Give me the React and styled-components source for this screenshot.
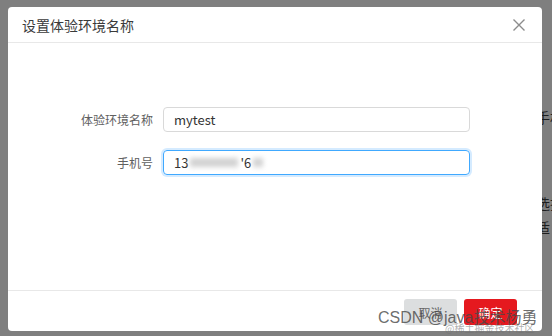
import React from "react";
import styled, { createGlobalStyle } from "styled-components";

const Global = createGlobalStyle`
  html, body { margin: 0; padding: 0; }
  body {
    font-family: "Noto Sans CJK SC", "Noto Sans", "Liberation Sans", sans-serif;
    background: #7f7f7f;
  }
`;

const Page = styled.div`
  position: relative;
  display: flex;
  width: 552px;
  height: 336px;
  padding: 7px 0 5px 8px;
  box-sizing: border-box;
  background: #7f7f7f;
  overflow: hidden;
`;

const Modal = styled.div`
  width: 534px;
  flex: none;
  display: flex;
  flex-direction: column;
  background: #fff;
  border-radius: 4px;
`;

const Header = styled.div`
  height: 36px;
  flex: none;
  display: flex;
  align-items: center;
  justify-content: space-between;
  padding: 0 16px 0 14px;
  border-bottom: 1px solid #e8e8e8;
  box-sizing: border-box;
`;

const Title = styled.div`
  font-size: 14px;
  color: #3a3a3a;
`;

const Close = styled.svg`
  width: 14px;
  height: 14px;
  stroke: #8c8c8c;
  stroke-width: 1.4;
`;

const Body = styled.div`
  flex: 1;
  display: flex;
  flex-direction: column;
  gap: 18px;
  padding-top: 64px;
`;

const Row = styled.div`
  display: flex;
  align-items: center;
  gap: 10px;
`;

const Label = styled.label`
  width: 145px;
  text-align: right;
  font-size: 12px;
  color: #606060;
`;

const Input = styled.div`
  width: 307px;
  height: 25px;
  box-sizing: border-box;
  display: flex;
  align-items: center;
  padding: 0 10px;
  border: 1px solid ${(p) => (p.$focus ? "#40a9ff" : "#d9d9d9")};
  border-radius: 4px;
  box-shadow: ${(p) => (p.$focus ? "0 0 0 2px rgba(24,144,255,0.18)" : "none")};
  font-size: 13px;
  color: #333;
`;

const Blur = styled.span`
  display: inline-block;
  width: ${(p) => p.$w}px;
  height: 9px;
  background: #d2d2d2;
  filter: blur(2.5px);
  margin: 0 2px;
`;

const Footer = styled.div`
  height: 41px;
  flex: none;
  display: flex;
  align-items: center;
  justify-content: flex-end;
  gap: 7px;
  padding: 2px 25px 0 0;
  border-top: 1px solid #e8e8e8;
  box-sizing: border-box;
`;

const Button = styled.button`
  width: 53px;
  height: 26px;
  border: none;
  border-radius: 3px;
  font-family: inherit;
  font-size: 12px;
  background: ${(p) => (p.$primary ? "#e5191f" : "#dcdedf")};
  color: ${(p) => (p.$primary ? "#fff" : "#666")};
`;

const Side = styled.div`
  flex: 1;
  overflow: hidden;
  font-size: 14px;
  color: #1e1e1e;
`;

const SideText = styled.div`
  margin-left: -6px;
  margin-top: ${(p) => p.$top}px;
  white-space: nowrap;
  line-height: 18px;
`;

const Watermark = styled.div`
  position: absolute;
  left: 378px;
  top: 304px;
  font-size: 16px;
  font-family: "Liberation Sans", "Noto Sans CJK SC", sans-serif;
  color: rgba(70, 70, 70, 0.8);
  white-space: nowrap;
`;

const SubMark = styled.div`
  position: absolute;
  left: 445px;
  top: 320px;
  font-size: 10px;
  color: rgba(110, 110, 110, 0.55);
  white-space: nowrap;
`;

export default function App() {
  return (
    <>
      <Global />
      <Page>
        <Modal>
          <Header>
            <Title>设置体验环境名称</Title>
            <Close viewBox="0 0 14 14">
              <path d="M1.5 1.5 L12.5 12.5 M12.5 1.5 L1.5 12.5" />
            </Close>
          </Header>
          <Body>
            <Row>
              <Label>体验环境名称</Label>
              <Input>mytest</Input>
            </Row>
            <Row>
              <Label>手机号</Label>
              <Input $focus>
                13<Blur $w={48} />'6<Blur $w={10} />
              </Input>
            </Row>
          </Body>
          <Footer>
            <Button>取消</Button>
            <Button $primary>确定</Button>
          </Footer>
        </Modal>
        <Side>
          <SideText $top={101}>手机</SideText>
          <SideText $top={68}>选择</SideText>
          <SideText $top={6}>适</SideText>
        </Side>
        <Watermark>CSDN @java技术杨勇</Watermark>
        <SubMark>@稀土掘金技术社区</SubMark>
      </Page>
    </>
  );
}
